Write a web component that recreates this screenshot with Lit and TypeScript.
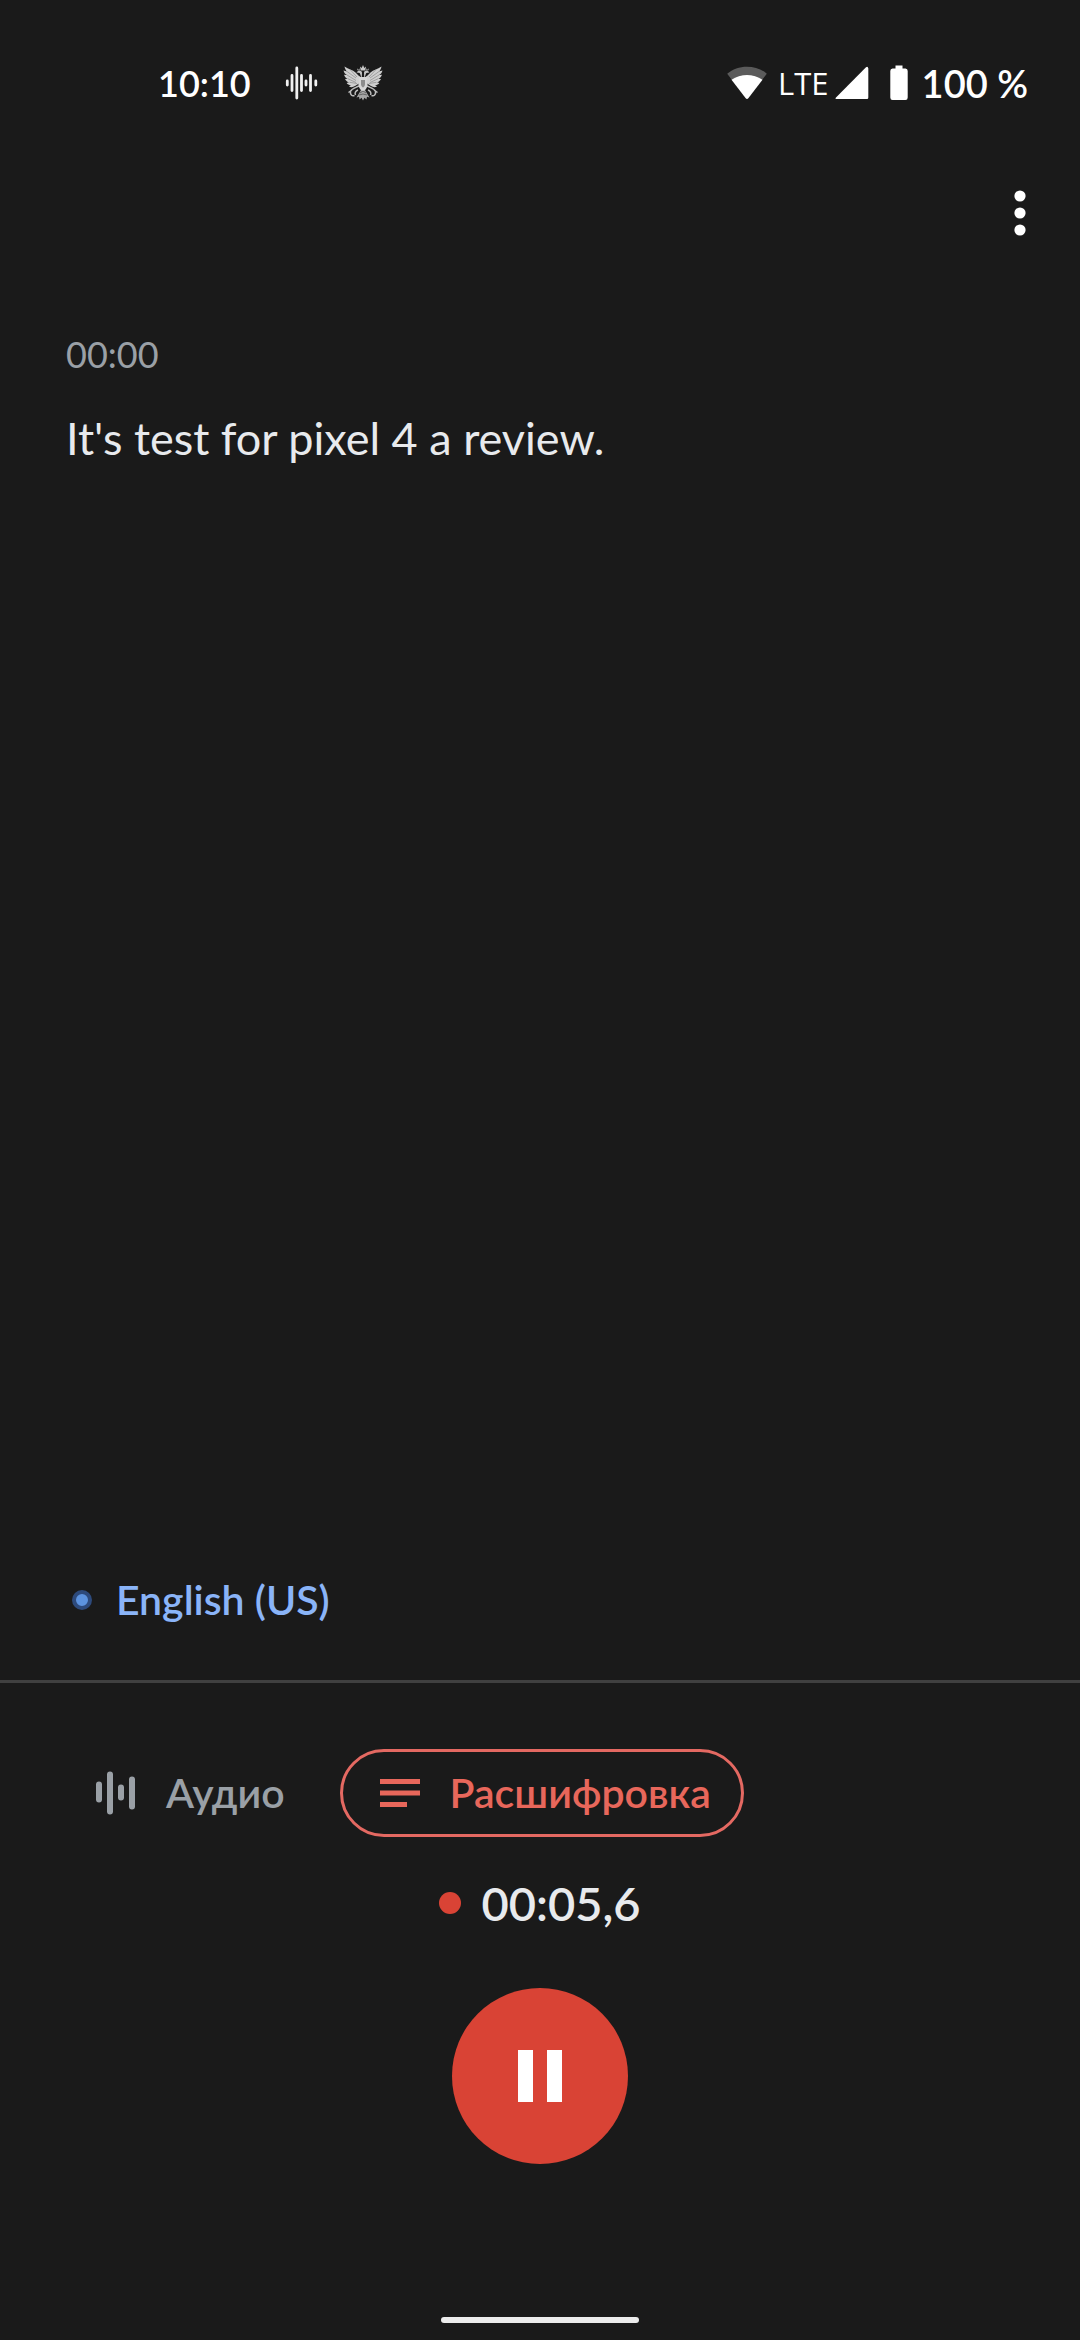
import { LitElement, html, css, svg } from "lit";
import { customElement, state } from "lit/decorators.js";

const eagleHalf = svg`
  <path d="M19 12.500 C16.500 12 15 10 12.500 7.500 C9.500 5 5.500 4 1.500 1.500 C2 4 3 5.500 4 6.500 L0.500 5.500 C1.200 8 2.500 9.300 4 10 L1 9.800 C1.800 12 3.200 13.300 4.800 13.800 L2 14 C3 16 4.500 17 6 17.300 L3.600 18 C4.800 19.600 6.500 20.200 8 20 L6 21.300 C7.500 22.600 10 22.400 12 21 L16 18.500 L19 19 Z" fill="#cfcfcf"/>
  <path d="M4 6.500 L13 13 M4 10 L13 15.500 M5 13.800 L13 17.500 M6.500 17.300 L14 18.500 M7 4.500 L14 12" stroke="#8a8a8a" stroke-width="0.7" fill="none"/>
  <path d="M18.800 13 C17.500 11 17.600 9 16.600 8 L13.500 7.600 L15 6 C16.500 5 18.600 5.600 19 7.500 Z" fill="#c4c4c4"/>
  <path d="M14.200 3.300 L15.500 4.800 L16.800 3.300 L16.600 5.300 L14.400 5.300 Z" fill="#b0b0b0"/>
  <path d="M16 21 C12 23 8.500 23.500 7.500 26.500 C7 29.500 9 31.500 11.500 30.500 M9 25 L5.500 27.500 M15 25 C12.500 26 11.500 28 12.500 30" stroke="#bdbdbd" stroke-width="1.500" fill="none"/>
  <path d="M18 25 L13.500 32.500 L16 31.800 L16.600 34.500 L18.500 32.800 L20 35.500 L20 25 Z" fill="#a6a6a6"/>
`;

const icons = {
  wave: html`<svg class="wave" viewBox="0 0 34 34" aria-hidden="true">
    <g stroke-linecap="round" stroke="#f1f1f1" fill="none">
      <path stroke-width="2.800" d="M2.300 15v4M7 9.500v15M11.800 2v30M16.500 9.500v15M21 15v4M25.500 9.500v15M30.800 15v4"/>
    </g></svg>`,
  eagle: html`<svg class="eagle" viewBox="0 0 40 36" aria-hidden="true">
    ${eagleHalf}<g transform="translate(40 0) scale(-1 1)">${eagleHalf}</g>
    <path d="M17 1.500 L18.700 3 L20 0 L21.300 3 L23 1.500 L22.300 5.500 H17.700 Z" fill="#c8c8c8"/>
    <path d="M16 12 H24 L24.600 20 C24 23.500 22 25.500 20 26.500 C18 25.500 16 23.500 15.400 20 Z" fill="#d6d6d6"/>
    <path d="M18 15 H22 V19 C22 21 21 22 20 22.500 C19 22 18 21 18 19 Z" fill="#8c8c8c"/>
    <path d="M17 28 L20 26 L23 28 M16 30 L20 29 L24 30" stroke="#5e5e5e" stroke-width="0.900" fill="none"/>
  </svg>`,
  wifi: html`<svg class="wifi" viewBox="0 0 42 34" aria-hidden="true">
    <path fill="#5b5b5b" d="M1.200 7.800C6.500 3 13.500 0.700 21 0.700S35.500 3 40.800 7.800L36 14C32 10.800 27 9 21 9S10 10.800 6 14Z"/>
    <path fill="#fff" d="M5.500 13.800C10 10.600 15 9 21 9s11 1.600 15.500 4.800L22.500 32Q21 33.800 19.500 32Z"/></svg>`,
  signal: html`<svg class="signal" viewBox="0 0 34 34" aria-hidden="true">
    <path fill="#fff" d="M1 31.500 31 1.200Q33 0 33.300 2.500V31.500Q33.300 33 32 33H1.800Q-.3 33 1 31.500Z"/></svg>`,
  battery: html`<svg class="battery" viewBox="0 0 18 36" aria-hidden="true">
    <path fill="#fff" d="M5.500 .5h7V3.500h3Q17.700 3.500 17.700 6V32.500Q17.700 35 15.500 35H2.500Q.3 35 .3 32.500V6Q.3 3.500 2.500 3.500h3Z"/></svg>`,
  more: html`<svg class="more-icon" viewBox="0 0 12 46" aria-hidden="true">
    <g fill="#fff"><circle cx="6" cy="6" r="5.600"/><circle cx="6" cy="23" r="5.600"/><circle cx="6" cy="40" r="5.600"/></g></svg>`,
  audio: html`<svg class="tab-icon" viewBox="0 0 40 44" aria-hidden="true">
    <path fill="none" stroke="currentColor" stroke-width="6" stroke-linecap="round" d="M3 13.500v15M14 3.500v37M25 16.500v10M36 8.500v27"/></svg>`,
  lines: html`<svg class="tab-icon" viewBox="0 0 40 44" aria-hidden="true">
    <path fill="currentColor" d="M0 8h40v5H0zM0 19.500h40v5H0zM0 31h27v5H0z"/></svg>`,
  pause: html`<svg class="pause-icon" viewBox="0 0 44 52" aria-hidden="true">
    <path fill="#fff" d="M0 0h15v52H0zM29 0h15v52H29z"/></svg>`,
};

@customElement("app-root")
export class AppRoot extends LitElement {
  static styles = css`
    :host {
      display: flex;
      flex-direction: column;
      min-height: 100vh;
      background: #1a1a1a;
      color: #e8eaed;
      font-family: Lato, "Open Sans", "Noto Sans", sans-serif;
      font-size: 41px;
      line-height: 48px;
    }
    svg { display: block; flex: none; }
    button {
      margin: 0;
      padding: 0;
      border: 0;
      background: none;
      color: inherit;
      font: inherit;
      cursor: pointer;
    }
    .status {
      display: flex;
      align-items: center;
      justify-content: space-between;
      padding: 59px 52px 5px 158px;
      color: #fff;
      font-size: 38px;
      font-weight: 600;
    }
    .group { display: flex; align-items: center; }
    .clock { margin-right: 34px; font-size: 36px; }
    .wave { width: 34px; height: 34px; margin-right: 24px; }
    .eagle { width: 40px; height: 36px; }
    .wifi { width: 42px; height: 34px; }
    .lte { margin: 0 6px 0 10px; font-family: "Open Sans", sans-serif; font-size: 31px; font-weight: 400; }
    .signal { width: 34px; height: 34px; }
    .battery { width: 18px; height: 36px; margin: 0 14px 0 21px; }
    .toolbar { display: flex; justify-content: flex-end; padding: 65px 24px 63px; }
    .more { display: flex; align-items: center; justify-content: center; width: 72px; height: 72px; }
    .more-icon { width: 12px; height: 46px; }
    .transcript { flex: 1; padding: 18px 66px; }
    .stamp { display: block; margin-bottom: 28px; color: #9aa0a6; font-size: 36px; }
    .text { margin: 0; font-size: 45px; line-height: 64px; }
    .language {
      display: flex;
      align-items: center;
      gap: 24px;
      padding: 0 72px 56px;
      color: #8ab4f8;
      font-weight: 600;
    }
    .pulse { box-sizing: border-box; width: 20px; height: 20px; border: 4px solid #2d4a7c; border-radius: 50%; background: #5c93e0; }
    .panel { display: flex; flex-direction: column; align-items: center; border-top: 3px solid #404040; padding-top: 66px; }
    .tabs { display: flex; gap: 22px; align-self: stretch; padding: 0 56px; }
    .tab {
      display: flex;
      align-items: center;
      gap: 30px;
      height: 88px;
      padding: 0 30px 0 37px;
      border: 3px solid transparent;
      border-radius: 44px;
      box-sizing: border-box;
      color: #9aa0a6;
      font-weight: 600;
    }
    .tab.selected { border-color: #e46962; color: #e8675b; }
    .tab-icon { width: 40px; height: 44px; }
    .timer {
      display: flex;
      align-items: center;
      gap: 20px;
      margin: 38px 0 57px;
      font-size: 47px;
      line-height: 56px;
      font-weight: 600;
    }
    .rec { width: 22px; height: 22px; border-radius: 50%; background: #d94335; }
    .pause { display: flex; align-items: center; justify-content: center; width: 176px; height: 176px; border-radius: 50%; background: #d94335; }
    .pause-icon { width: 44px; height: 52px; }
    .nav { display: flex; justify-content: center; padding: 153px 0 17px; }
    .handle { width: 198px; height: 6px; border-radius: 3px; background: #ececec; }
  `;

  @state() private tab = "text";

  private renderTab(id: string, label: string, icon: unknown) {
    const on = this.tab === id;
    return html`<button class="tab ${on ? "selected" : ""}" role="tab" aria-selected=${on ? "true" : "false"}
      @click=${() => (this.tab = id)}>${icon}<span>${label}</span></button>`;
  }

  render() {
    return html`
      <header class="status">
        <div class="group"><span class="clock">10:10</span>${icons.wave}${icons.eagle}</div>
        <div class="group">${icons.wifi}<span class="lte">LTE</span>${icons.signal}${icons.battery}<span>100 %</span></div>
      </header>
      <div class="toolbar"><button class="more" aria-label="Меню">${icons.more}</button></div>
      <main class="transcript">
        <time class="stamp">00:00</time>
        <p class="text">It's test for pixel 4 a review.</p>
      </main>
      <div class="language"><span class="pulse"></span><span>English (US)</span></div>
      <section class="panel">
        <div class="tabs" role="tablist">
          ${this.renderTab("audio", "Аудио", icons.audio)}
          ${this.renderTab("text", "Расшифровка", icons.lines)}
        </div>
        <div class="timer"><span class="rec"></span><span>00:05,6</span></div>
        <button class="pause" aria-label="Пауза">${icons.pause}</button>
      </section>
      <div class="nav"><div class="handle"></div></div>
    `;
  }
}
